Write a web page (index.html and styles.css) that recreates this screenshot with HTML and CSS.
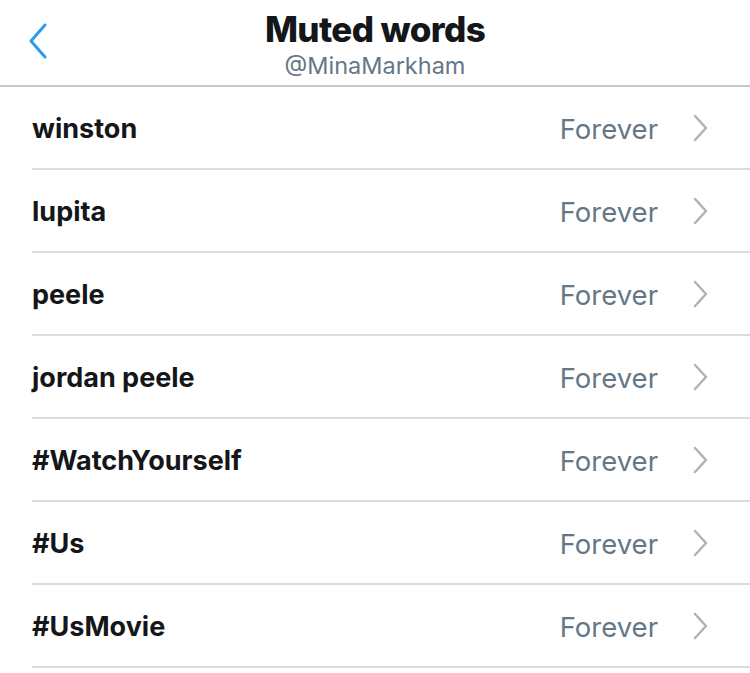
FILE: index.html
```html
<!DOCTYPE html>
<html>
<head>
<meta charset="utf-8">
<link rel="stylesheet" href="styles.css">
</head>
<body>
<header class="nav">
  <svg class="back" width="22" height="38" viewBox="0 0 22 38"><path d="M18 3 L4 19 L18 35" fill="none" stroke="#2b9bea" stroke-width="3" stroke-linecap="round" stroke-linejoin="round"/></svg>
  <div class="titles">
    <div class="title">Muted words</div>
    <div class="handle">@MinaMarkham</div>
  </div>
</header>
<ul class="list">
  <li class="row"><span class="word">winston</span><span class="dur">Forever</span><svg class="chev" width="18" height="30" viewBox="0 0 18 30"><path d="M3 3 L14 15 L3 27" fill="none" stroke="#aab4bd" stroke-width="2.5" stroke-linecap="round" stroke-linejoin="round"/></svg></li>
  <li class="row"><span class="word">lupita</span><span class="dur">Forever</span><svg class="chev" width="18" height="30" viewBox="0 0 18 30"><path d="M3 3 L14 15 L3 27" fill="none" stroke="#aab4bd" stroke-width="2.5" stroke-linecap="round" stroke-linejoin="round"/></svg></li>
  <li class="row"><span class="word">peele</span><span class="dur">Forever</span><svg class="chev" width="18" height="30" viewBox="0 0 18 30"><path d="M3 3 L14 15 L3 27" fill="none" stroke="#aab4bd" stroke-width="2.5" stroke-linecap="round" stroke-linejoin="round"/></svg></li>
  <li class="row"><span class="word">jordan peele</span><span class="dur">Forever</span><svg class="chev" width="18" height="30" viewBox="0 0 18 30"><path d="M3 3 L14 15 L3 27" fill="none" stroke="#aab4bd" stroke-width="2.5" stroke-linecap="round" stroke-linejoin="round"/></svg></li>
  <li class="row"><span class="word">#WatchYourself</span><span class="dur">Forever</span><svg class="chev" width="18" height="30" viewBox="0 0 18 30"><path d="M3 3 L14 15 L3 27" fill="none" stroke="#aab4bd" stroke-width="2.5" stroke-linecap="round" stroke-linejoin="round"/></svg></li>
  <li class="row"><span class="word">#Us</span><span class="dur">Forever</span><svg class="chev" width="18" height="30" viewBox="0 0 18 30"><path d="M3 3 L14 15 L3 27" fill="none" stroke="#aab4bd" stroke-width="2.5" stroke-linecap="round" stroke-linejoin="round"/></svg></li>
  <li class="row"><span class="word">#UsMovie</span><span class="dur">Forever</span><svg class="chev" width="18" height="30" viewBox="0 0 18 30"><path d="M3 3 L14 15 L3 27" fill="none" stroke="#aab4bd" stroke-width="2.5" stroke-linecap="round" stroke-linejoin="round"/></svg></li>
</ul>
</body>
</html>
```
FILE: styles.css
```css
* { box-sizing: border-box; }
html, body { margin: 0; padding: 0; background: #fff; }
body { font-family: Inter, "Noto Sans", sans-serif; color: #14171a; width: 750px; overflow: hidden; }
.nav {
  position: relative;
  height: 87px;
  border-bottom: 2px solid #c8c8cc;
  display: flex;
  justify-content: center;
}
.back { position: absolute; left: 27px; top: 22px; }
.titles { display: flex; flex-direction: column; align-items: center; padding-top: 8px; }
.title { font-size: 35px; font-weight: 800; letter-spacing: -0.6px; line-height: 43px; color: #14171a; }
.handle { font-size: 23.5px; font-weight: 400; line-height: 29px; color: #657786; }
.list { list-style: none; margin: 0; padding: 0 0 0 32px; }
.row {
  height: 83px;
  display: flex;
  align-items: center;
  border-bottom: 2px solid #dcdce0;
  padding-right: 40px;
}
.word { flex: 1; font-size: 27px; font-weight: 700; color: #14171a; padding-top: 2px; }
.dur { font-size: 27.5px; font-weight: 400; color: #657786; margin-right: 34px; padding-top: 2px; }
.chev { display: block; }
```
